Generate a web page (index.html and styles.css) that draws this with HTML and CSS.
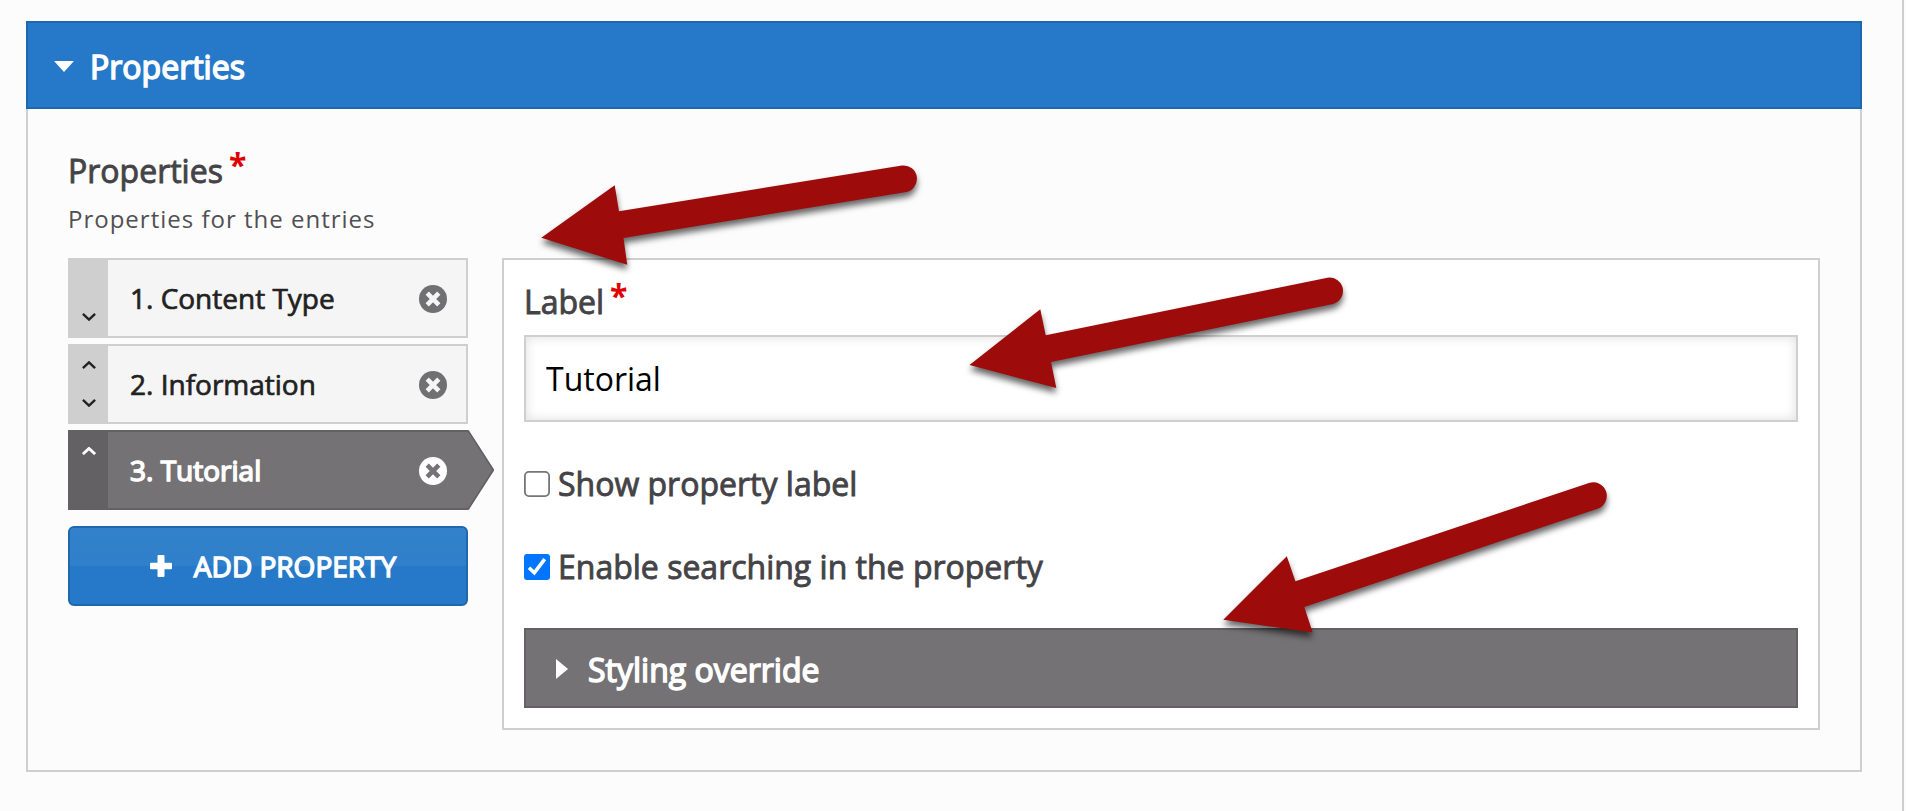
FILE: index.html
```
<!DOCTYPE html>
<html lang="en">
<head>
  <meta charset="UTF-8">
  <meta name="viewport" content="width=device-width,initial-scale=1.0">
  <title>Properties</title>
  <link rel="stylesheet" href="styles.css">
</head>
<body>

<main class="page">
  <section class="section">
    <h2 class="section-head">
      <svg class="caret" width="20" height="11" viewBox="0 0 20 11"><path d="M0 0h20L10 11z" fill="#fff"/></svg>
      <span>Properties</span>
    </h2>

    <div class="section-body">
      <div class="label">Properties<span class="required">*</span></div>
      <p class="description">Properties for the entries</p>

      <div class="columns">
        <div class="tabs">
          <div class="tab">
            <div class="handle">
              <svg class="down" width="14" height="8" viewBox="0 0 14 8"><path d="M.9 .9L7 6.6L13.1 .9"/></svg>
            </div>
            <span class="tab-title">1. Content Type</span>
            <svg class="remove" width="28" height="28" viewBox="0 0 28 28"><circle cx="14" cy="14" r="14"/><path d="M8.200 8.200l11.600 11.600M19.800 8.200L8.200 19.800"/></svg>
          </div>
          <div class="tab">
            <div class="handle">
              <svg class="up" width="14" height="8" viewBox="0 0 14 8"><path d="M.9 7.1L7 1.4L13.1 7.1"/></svg>
              <svg class="down" width="14" height="8" viewBox="0 0 14 8"><path d="M.9 .9L7 6.6L13.1 .9"/></svg>
            </div>
            <span class="tab-title">2. Information</span>
            <svg class="remove" width="28" height="28" viewBox="0 0 28 28"><circle cx="14" cy="14" r="14"/><path d="M8.200 8.200l11.600 11.600M19.800 8.200L8.200 19.800"/></svg>
          </div>
          <div class="tab active">
            <div class="handle">
              <svg class="up" width="14" height="8" viewBox="0 0 14 8"><path d="M.9 7.1L7 1.4L13.1 7.1"/></svg>
            </div>
            <span class="tab-title">3. Tutorial</span>
            <svg class="remove" width="28" height="28" viewBox="0 0 28 28"><circle cx="14" cy="14" r="14"/><path d="M8.200 8.200l11.600 11.600M19.800 8.200L8.200 19.800"/></svg>
            <svg class="pointer" width="26" height="80" viewBox="0 0 26 80"><path d="M0 0L26 40L0 80z" fill="#747275"/><path d="M0 .5L25.4 40L0 79.5" fill="none" stroke="#636164" stroke-width="1.6"/></svg>
          </div>
          <button class="add" type="button">
            <svg width="22" height="22" viewBox="0 0 22 22"><path d="M8.5 0h5q1 0 1 1v6.7H21q1 0 1 1v4.6q0 1-1 1h-6.5V21q0 1-1 1h-5q-1 0-1-1v-6.7H1q-1 0-1-1V8.700q0-1 1-1h6.500V1q0-1 1-1z" fill="#fff"/></svg>
            <span>ADD PROPERTY</span>
          </button>
        </div>

        <div class="panel">
          <label class="label" for="label">Label<span class="required">*</span></label>
          <input class="text" id="label" type="text" value="Tutorial">
          <div class="check">
            <svg width="26" height="26" viewBox="0 0 26 26"><rect x=".9" y=".9" width="24.200" height="24.200" rx="4" fill="#fff" stroke="#767676" stroke-width="1.8"/></svg>
            <span>Show property label</span>
          </div>
          <div class="check">
            <svg width="26" height="26" viewBox="0 0 26 26"><rect width="26" height="26" rx="3" fill="#0075ff"/><path d="M5 13.800L10.300 18.800L20.700 5.200" fill="none" stroke="#fff" stroke-width="3.600"/></svg>
            <span>Enable searching in the property</span>
          </div>
          <div class="override">
            <svg width="12" height="20" viewBox="0 0 12 20"><path d="M0 0v20L12 10z" fill="#fff"/></svg>
            <span>Styling override</span>
          </div>
        </div>
      </div>
    </div>
  </section>
</main>

<!-- Arrows over the form -->
<svg class="arrows" width="1906" height="811" viewBox="0 0 1906 811">
  <path d="M541.3 237.700L614.700 185.300L619 211.300L902 165.500A13.400 13.400 0 0 1 905 192.200L623.500 238L627.200 264.800Z"/>
  <path d="M969.500 365L1040.300 309.300L1045.700 335.300L1327.500 277.700A13.400 13.400 0 0 1 1333 303.900L1051 362L1056.300 388Z"/>
  <path d="M1223.300 619.800L1286.800 556.300L1295.400 581.300L1589 483A13.400 13.400 0 0 1 1597.500 508.700L1304.300 607L1312.700 632.500Z"/>
</svg>

</body>
</html>
```
FILE: styles.css
```
/* ========== Base ========== */
* { margin:0; padding:0; box-sizing:border-box }
body {
  font-family: "Open Sans", sans-serif;
  font-size: 32px;
  background: #fcfcfc;
  color: #444347;
}
svg { display:block; flex-shrink:0 }

.page {
  width: 1904px;
  height: 811px;
  padding: 21px 40px 0 26px;
  border-right: 2px solid #cfcfcf;
}

/* ========== Section ========== */
.section-head {
  display: flex;
  align-items: center;
  height: 88px;
  padding: 4px 26px 0;
  background: #2679c8;
  border: 2px solid #1f68ad;
  color: #fff;
  font-size: 32px;
  font-weight: 400;
  line-height: 44px;
  -webkit-text-stroke: 1.5px;
}
.section-head .caret { margin:-2px 16px 0 0 }
.section-body {
  height: 663px;
  padding: 40px 40px 0;
  border: 2px solid #cfcfcf;
  border-top: 0;
}
.label {
  display: block;
  line-height: 44px;
  -webkit-text-stroke: .9px;
}
.required {
  position: relative;
  top: -6px;
  margin-left: 6px;
  color: #e00000;
  font-weight: 700;
  -webkit-text-stroke: 0;
}
.description {
  margin: 10px 0 23px;
  color: #515053;
  font-size: 24px;
  line-height: 32px;
  letter-spacing: 1px;
}
.columns { display:flex; gap:34px }

/* ========== Tabs ========== */
.tabs {
  display: flex;
  flex-direction: column;
  gap: 6px;
  width: 400px;
}
.tab {
  position: relative;
  display: flex;
  align-items: center;
  height: 80px;
  padding-right: 19px;
  background: #f5f5f5;
  border: 2px solid #cfcfcf;
  border-left: 0;
  color: #222;
  font-size: 28px;
  -webkit-text-stroke: .7px;
}
.handle {
  display: flex;
  flex-direction: column;
  align-items: center;
  width: 40px;
  height: 76px;
  padding: 15px 0 15px 2px;
  background: #cfcfcf;
}
.handle path {
  fill: none;
  stroke: #222;
  stroke-width: 2.4;
}
.handle .down { margin-top:auto }
.tab-title { flex:1; padding-left:22px }
.remove { margin-top:1px }
.remove circle { fill:#707073 }
.remove path { stroke:#f5f5f5; stroke-width:4.6 }

.tab.active {
  padding-right: 21px;
  background: #747275;
  border-color: #636164;
  border-right: 0;
  color: #fff;
  -webkit-text-stroke: 1.5px;
}
.active .handle { background:#636164 }
.active .handle path { stroke:#fff; stroke-width:2.8 }
.active .remove circle { fill:#fff }
.active .remove path { stroke:#747275 }
.pointer {
  position: absolute;
  top: -2px;
  right: -26px;
}

.add {
  display: flex;
  align-items: center;
  justify-content: center;
  gap: 22px;
  height: 80px;
  margin-top: 10px;
  padding-left: 10px;
  background: linear-gradient(#3381cb, #2f7fca 50%, #2679c8 50%);
  border: 2px solid #1f68ad;
  border-radius: 6px;
  color: #fff;
  font: 28px "Open Sans", sans-serif;
}
.add span { -webkit-text-stroke:1.4px }

/* ========== Panel ========== */
.panel {
  flex: 1;
  height: 472px;
  padding: 20px;
  background: #fff;
  border: 2px solid #cfcfcf;
}
.text {
  display: block;
  width: 100%;
  height: 87px;
  margin-top: 11px;
  padding: 0 20px;
  border: 2px solid #cfcfcf;
  box-shadow: inset 0 0 12px rgba(0,0,0,0.13);
  background: #fff;
  color: #000;
  font: 32px "Open Sans", sans-serif;
}
.check {
  display: flex;
  align-items: center;
  gap: 8px;
  margin-top: 39px;
  line-height: 44px;
  -webkit-text-stroke: .9px;
}
.text + .check { margin-top:40px }
.override {
  display: flex;
  align-items: center;
  gap: 20px;
  height: 80px;
  margin-top: 39px;
  padding: 3px 30px 0;
  background: #747275;
  border: 2px solid #636164;
  color: #fff;
}
.override svg { margin-top:-2px }
.override span { -webkit-text-stroke:1.5px }

/* ========== Arrows ========== */
.arrows {
  position: absolute;
  top: 0;
  left: 0;
  pointer-events: none;
}
.arrows path {
  fill: #9e0b0b;
  filter: drop-shadow(0 5px 3px rgba(0,0,0,0.6));
}
```
